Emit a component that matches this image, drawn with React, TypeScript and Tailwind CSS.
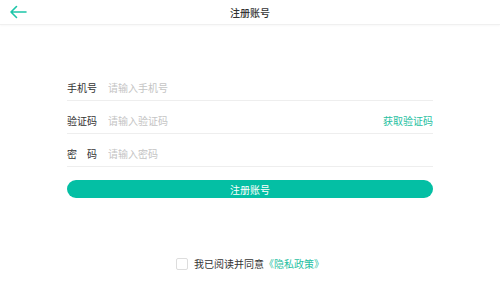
import { useState } from "react";

const FONT = { fontFamily: '"Noto Sans CJK SC", "Noto Sans", sans-serif' };

function FieldRow({
  label,
  placeholder,
  action,
  type = "text",
}: {
  label: React.ReactNode;
  placeholder: string;
  action?: string;
  type?: string;
}) {
  return (
    <div className="flex h-[33px] items-end border-b border-[#eeeeee] pb-[5px] leading-[14px]">
      <div className="w-[41px] text-[10px] text-[#333333]">{label}</div>
      <input
        type={type}
        placeholder={placeholder}
        className="flex-1 bg-transparent text-[10px] leading-[14px] text-[#333] outline-none placeholder:text-[#c4c4c4]"
        style={FONT}
      />
      {action && <button className="text-[10px] leading-[14px] text-[#1fbfa2]">{action}</button>}
    </div>
  );
}

export default function App() {
  const [agreed, setAgreed] = useState(false);

  return (
    <div className="flex h-[282px] w-[500px] flex-col bg-white" style={FONT}>
      <header className="relative flex h-[25px] items-center justify-center border-b border-[#f0f0f0] shadow-[0_1px_2px_rgba(0,0,0,0.03)]">
        <button className="absolute left-[9px] top-[5px] text-[#1cc5a8]">
          <svg width="18" height="14" viewBox="0 0 18 14" fill="none">
            <path
              d="M17 7H2M7.5 1.5L2 7l5.5 5.5"
              stroke="currentColor"
              strokeWidth="1.6"
              strokeLinecap="round"
              strokeLinejoin="round"
            />
          </svg>
        </button>
        <h1 className="text-[10px] font-medium text-[#333333]">注册账号</h1>
      </header>

      <main className="mx-auto mt-[43px] w-[366px]">
        <FieldRow label="手机号" placeholder="请输入手机号" />
        <FieldRow label="验证码" placeholder="请输入验证码" action="获取验证码" />
        <FieldRow
          label={<span className="tracking-[10px]">密码</span>}
          placeholder="请输入密码"
          type="password"
        />
        <button className="mt-[13px] h-[18px] w-full rounded-full bg-[#04bfa4] text-[10px] text-white">
          注册账号
        </button>
      </main>

      <footer className="mt-auto mb-[11px] flex items-center justify-center gap-[6px]">
        <button
          onClick={() => setAgreed(!agreed)}
          className={`h-[12px] w-[12px] rounded-[2px] border ${agreed ? "border-[#04bfa4] bg-[#04bfa4]" : "border-[#dddddd] bg-white"}`}
        />
        <span className="text-[10px] text-[#333333]">
          我已阅读并同意<span className="text-[#1fbfa2]">《隐私政策》</span>
        </span>
      </footer>
    </div>
  );
}
